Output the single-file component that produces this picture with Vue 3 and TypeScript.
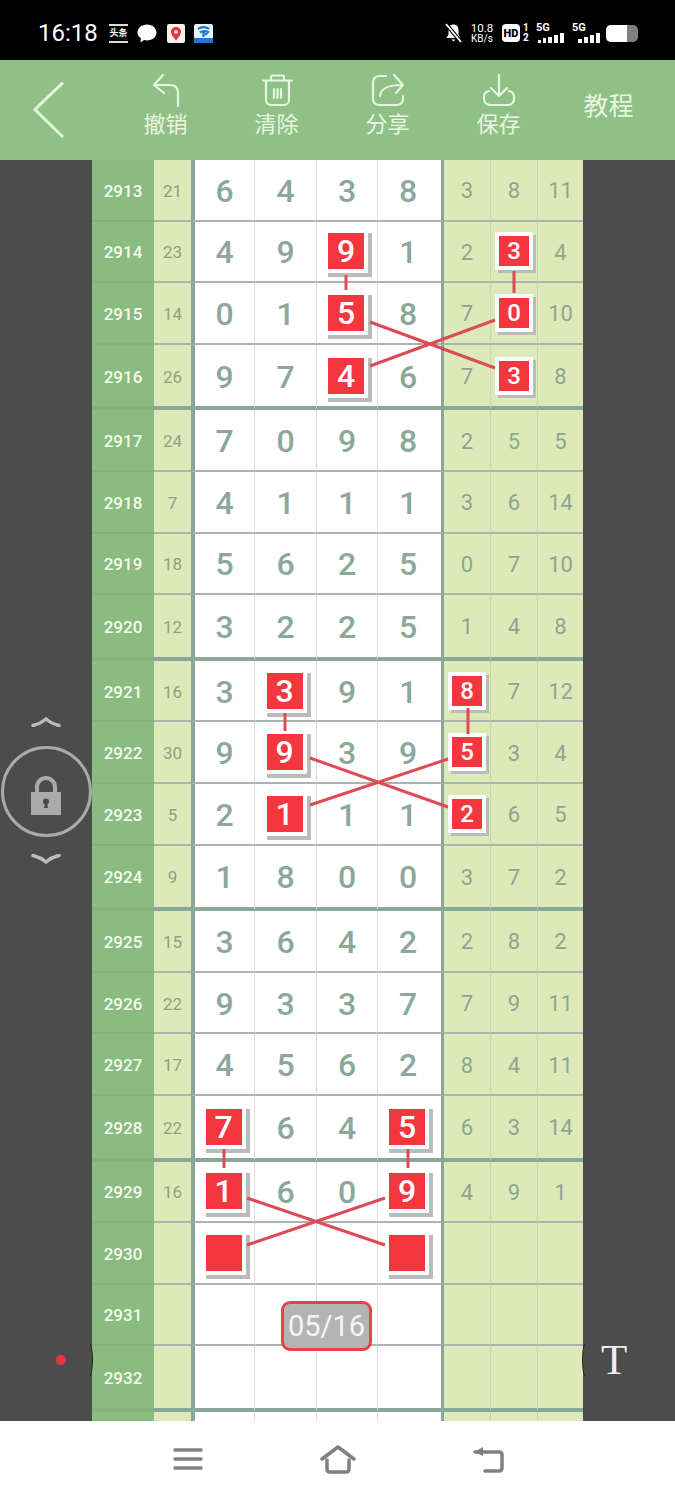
<template>
  <div class="page">
    <div class="status-bar">
      <div class="status-left">
        <span class="time">16:18</span>
        <div class="toutiao"><span>头条</span></div>
        <svg class="st-icon bubble" width="20" height="19" viewBox="0 0 20 19">
          <path d="M10 0.5c5.2 0 9.5 3.6 9.5 8s-4.300 8-9.500 8c-1 0-2-.1-2.900-.4L3.500 18.500l.4-4.200C1.700 12.900.5 10.800.5 8.500c0-4.400 4.300-8 9.500-8z" fill="#fff" />
        </svg>
        <svg class="st-icon map" width="18" height="19" viewBox="0 0 18 19">
          <rect width="18" height="19" rx="2" fill="#f4f1ea" />
          <path d="M9 3c-3 0-5 2.200-5 4.800C4 11 9 16.500 9 16.500s5-5.500 5-8.700C14 5.200 12 3 9 3z" fill="#d9363e" />
          <circle cx="9" cy="8" r="2" fill="#f8c9c9" />
        </svg>
        <svg class="st-icon telecom" width="19" height="19" viewBox="0 0 19 19">
          <rect width="19" height="19" rx="2" fill="#e8f2fb" />
          <rect y="14" width="19" height="5" fill="#1c78d2" />
          <path d="M4 5c3-2.500 8-2.500 11 0M6 8.500c2-1.500 5-2 8-.5l-3 3M9.500 7v6" fill="none" stroke="#1c78d2" stroke-width="2.200" />
        </svg>
      </div>
      <div class="status-right">
        <svg width="19" height="20" viewBox="0 0 19 20">
          <path d="M9.500 1.500c-3 0-5 2.200-5 5.500v4.500L2.500 15h14l-2-3.500V7c0-3.300-2-5.500-5-5.500z" fill="#fff" />
          <path d="M7.500 16.500h4l-2 2z" fill="#fff" />
          <path d="M2 1l15 18" stroke="#000" stroke-width="4" />
          <path d="M2 1l15 18" stroke="#fff" stroke-width="1.800" />
        </svg>
        <div class="speed">
          <span>10.8</span>
          <span class="speed-unit">KB/s</span>
        </div>
        <div class="hd"><span>HD</span></div>
        <div class="sim"><span>1</span><span>2</span></div>
        <div class="signal first">
          <span class="five-g">5G</span>
          <div class="bars">
            <i v-for="h in [3, 5, 6, 8, 10]" :key="h" :style="{ height: h + 'px' }"></i>
          </div>
        </div>
        <div class="signal second">
          <span class="five-g">5G</span>
          <div class="bars">
            <i v-for="h in [4, 6, 8, 10]" :key="h" :style="{ height: h + 'px' }"></i>
          </div>
        </div>
        <div class="battery"><div class="battery-level"></div></div>
      </div>
    </div>

    <div class="toolbar">
      <div class="back">
        <svg width="36" height="60" viewBox="0 0 36 60">
          <path d="M31 2.500 3 29.500 31 57" fill="none" stroke="#e4f5dc" stroke-width="3" />
        </svg>
      </div>
      <div class="tool">
        <svg class="tool-icon" viewBox="0 0 36 36">
          <path d="M15 3 6 13l10 8M6 13h16q8 0 8 8v13" />
        </svg>
        <span>撤销</span>
      </div>
      <div class="tool">
        <svg class="tool-icon" viewBox="0 0 36 36">
          <path d="M4 8.500h29M12 8V5q0-1.500 1.500-1.500h10Q25 3.500 25 5v3M7 9v19a5 5 0 0 0 5 5h13a5 5 0 0 0 5-5V9M15 17v9M18.500 17v9M22 17v9" />
        </svg>
        <span>清除</span>
      </div>
      <div class="tool">
        <svg class="tool-icon" viewBox="0 0 36 36">
          <path d="M16 4H9a6 6 0 0 0-6 6v17a6 6 0 0 0 6 6h18a6 6 0 0 0 6-6v-3M10 24c1-8 8-11 22-11M24 3l9 10-7 8" />
        </svg>
        <span>分享</span>
      </div>
      <div class="tool">
        <svg class="tool-icon" viewBox="0 0 36 36">
          <path d="M18 3v21M10 16l8 8 8-8M8 19q-5 1-5 6v2a6 6 0 0 0 6 6h18a6 6 0 0 0 6-6v-2q0-5-5-6" />
        </svg>
        <span>保存</span>
      </div>
      <div class="tutorial">教程</div>
    </div>

    <div class="main">
      <div class="rail left-rail">
        <svg class="chevron" width="30" height="10" viewBox="0 0 30 10">
          <path d="M2 8.500Q9 7 15 2q6 5 13 6.500" />
        </svg>
        <div class="lock">
          <svg width="32" height="40" viewBox="0 0 32 40">
            <path d="M7 18V11a9 9 0 0 1 18 0v7" fill="none" stroke="#aaa" stroke-width="4" />
            <rect x="1" y="16" width="30" height="23" fill="#aaa" />
            <circle cx="16" cy="25.500" r="3" fill="#4c4c4c" />
            <path d="M15 26h2l1 6h-4z" fill="#4c4c4c" />
          </svg>
        </div>
        <svg class="chevron" width="30" height="10" viewBox="0 0 30 10">
          <path d="M2 1.500Q9 3 15 8q6-5 13-6.500" />
        </svg>
        <div class="rec-dot"></div>
        <div class="notch notch-left"></div>
      </div>

      <div class="board">
        <div
          v-for="(row, i) in rows"
          :key="i"
          :class="['row', { end: (i + 1) % 4 === 0 }]"
        >
          <div class="cell issue">{{ row.no }}</div>
          <div class="cell sum">{{ row.sum }}</div>
          <div
            v-for="(n, j) in row.main"
            :key="'m' + j"
            :class="['cell', 'digit', 'd' + j]"
          >
            <span v-if="row.hit.includes(j)" class="mark">{{ n }}</span>
            <template v-else>{{ n }}</template>
          </div>
          <div
            v-for="(n, j) in row.side"
            :key="'s' + j"
            :class="['cell', 'side', 's' + j]"
          >
            <span v-if="row.sideHit.includes(j)" class="mark small">{{ n }}</span>
            <template v-else>{{ n }}</template>
          </div>
        </div>

        <svg class="links" width="491" height="1261" viewBox="92 160 491 1261">
          <line
            v-for="(l, i) in links"
            :key="i"
            :x1="l[0]"
            :y1="l[1]"
            :x2="l[2]"
            :y2="l[3]"
          />
        </svg>
        <div class="date-pill">05/16</div>
      </div>

      <div class="rail right-rail">
        <div class="text-btn">T</div>
        <div class="notch notch-right"></div>
      </div>
    </div>

    <div class="nav-bar">
      <svg width="30" height="24" viewBox="0 0 30 24">
        <path d="M2 3h26M2 12h26M2 21h26" fill="none" stroke="#808080" stroke-width="3.500" stroke-linecap="round" />
      </svg>
      <svg width="36" height="29" viewBox="0 0 36 29">
        <path d="M2 14 18 2l16 12M7 15v9q0 3 3 3h16q3 0 3-3v-9" fill="none" stroke="#808080" stroke-width="3.500" stroke-linecap="round" stroke-linejoin="round" />
      </svg>
      <svg width="32" height="27" viewBox="0 0 32 27">
        <path d="M3 6h24q3 0 3 3v13q0 3-3 3H13" fill="none" stroke="#808080" stroke-width="3.500" stroke-linecap="round" />
        <path d="M11 1 2 6l9 4z" fill="#808080" />
      </svg>
    </div>
  </div>
</template>

<script setup lang="ts">
interface Row {
  no: number | string
  sum: number | string
  main: (number | string)[]
  side: (number | string)[]
  hit: number[]
  sideHit: number[]
}

const mk = (
  no: number | string,
  sum: number | string,
  main: string,
  side: (number | string)[],
  hit: number[] = [],
  sideHit: number[] = []
): Row => ({ no, sum, main: main.split(''), side, hit, sideHit })

const rows: Row[] = [
  mk(2913, 21, '6438', [3, 8, 11]),
  mk(2914, 23, '4991', [2, 3, 4], [2], [1]),
  mk(2915, 14, '0158', [7, 0, 10], [2], [1]),
  mk(2916, 26, '9746', [7, 3, 8], [2], [1]),
  mk(2917, 24, '7098', [2, 5, 5]),
  mk(2918, 7, '4111', [3, 6, 14]),
  mk(2919, 18, '5625', [0, 7, 10]),
  mk(2920, 12, '3225', [1, 4, 8]),
  mk(2921, 16, '3391', [8, 7, 12], [1], [0]),
  mk(2922, 30, '9939', [5, 3, 4], [1], [0]),
  mk(2923, 5, '2111', [2, 6, 5], [1], [0]),
  mk(2924, 9, '1800', [3, 7, 2]),
  mk(2925, 15, '3642', [2, 8, 2]),
  mk(2926, 22, '9337', [7, 9, 11]),
  mk(2927, 17, '4562', [8, 4, 11]),
  mk(2928, 22, '7645', [6, 3, 14], [0, 3]),
  mk(2929, 16, '1609', [4, 9, 1], [0, 3]),
  { no: 2930, sum: '', main: ['', '', '', ''], side: ['', '', ''], hit: [0, 3], sideHit: [] },
  { no: 2931, sum: '', main: ['', '', '', ''], side: ['', '', ''], hit: [], sideHit: [] },
  { no: 2932, sum: '', main: ['', '', '', ''], side: ['', '', ''], hit: [], sideHit: [] },
  { no: '', sum: '', main: ['', '', '', ''], side: ['', '', ''], hit: [], sideHit: [] }
]

// page coordinates, the svg viewBox maps them onto the board
const links: number[][] = [
  [346, 275, 346, 290],
  [514, 271, 514, 293],
  [370, 322, 495, 368],
  [370, 366, 495, 320],
  [285, 713, 285, 731],
  [468, 708, 468, 734],
  [310, 758, 448, 807],
  [310, 805, 448, 759],
  [224, 1149, 224, 1168],
  [408, 1149, 408, 1168],
  [247, 1198, 385, 1245],
  [247, 1245, 385, 1198]
]
</script>

<style scoped>
.page {
  width: 675px;
  height: 1500px;
  display: flex;
  flex-direction: column;
  overflow: hidden;
  font-family: Roboto, 'Noto Sans CJK SC', sans-serif;
}

.status-bar {
  height: 60px;
  flex-shrink: 0;
  background: #000;
  color: #fff;
  display: flex;
  justify-content: space-between;
  align-items: center;
  padding: 14px 37px 8px 38px;
  box-sizing: border-box;
}

.status-left,
.status-right {
  display: flex;
  align-items: center;
}

.time {
  font-size: 24px;
  width: 71px;
}

.toutiao {
  width: 19px;
  height: 19px;
  border-top: 2px solid #ddd;
  border-bottom: 2px solid #ddd;
  box-sizing: border-box;
  display: flex;
  align-items: center;
  justify-content: center;
}

.toutiao span {
  font-size: 9px;
  font-weight: 700;
  line-height: 11px;
  white-space: nowrap;
}

.bubble {
  margin-left: 9px;
}

.map {
  margin-left: 10px;
}

.telecom {
  margin-left: 9px;
}

.speed {
  display: flex;
  flex-direction: column;
  align-items: center;
  width: 26px;
  margin-left: 6px;
  font-size: 11.500px;
  line-height: 12px;
}

.speed-unit {
  font-size: 10px;
  line-height: 10px;
}

.hd {
  width: 18px;
  height: 18px;
  margin-left: 7px;
  border-radius: 4px;
  background: #fff;
  color: #000;
  display: flex;
  align-items: center;
  justify-content: center;
  font-size: 11px;
  font-weight: 900;
}

.sim {
  display: flex;
  flex-direction: column;
  margin-left: 3px;
  font-size: 10px;
  font-weight: 700;
  line-height: 10px;
  width: 6px;
}

.signal {
  width: 28px;
  height: 20px;
  position: relative;
}

.signal.first {
  margin-left: 7px;
}

.signal.second {
  margin-left: 8px;
  width: 28px;
}

.five-g {
  position: absolute;
  left: 0;
  top: 0;
  font-size: 11px;
  font-weight: 700;
  line-height: 10px;
}

.bars {
  position: absolute;
  right: 0;
  bottom: 0;
  display: flex;
  align-items: flex-end;
  gap: 2px;
}

.bars i {
  display: block;
  width: 4px;
  background: #fff;
}

.signal.first .bars i:nth-child(-n+2) {
  width: 3px;
}

.battery {
  width: 32px;
  height: 17px;
  margin-left: 6px;
  border-radius: 5px;
  background: #808080;
  overflow: hidden;
}

.battery-level {
  width: 21px;
  height: 100%;
  background: #fff;
}

.toolbar {
  height: 100px;
  flex-shrink: 0;
  background: #8fc187;
  color: #e8f5e1;
  display: flex;
  align-items: flex-start;
}

.back {
  width: 110px;
  padding: 20px 0 0 32px;
  box-sizing: border-box;
}

.back svg {
  display: block;
}

.tool {
  width: 111px;
  padding-top: 12px;
  display: flex;
  flex-direction: column;
  align-items: center;
  font-size: 22px;
  line-height: 26px;
}

.tool-icon {
  width: 36px;
  height: 36px;
  fill: none;
  stroke: #e8f5e1;
  stroke-width: 2.200;
  stroke-linecap: round;
  stroke-linejoin: round;
}

.tool span {
  margin-top: 4px;
}

.tutorial {
  flex: 1;
  padding-right: 12px;
  text-align: center;
  font-size: 25px;
  line-height: 94px;
}

.main {
  flex: 1;
  display: flex;
  min-height: 0;
  background: #4c4c4c;
}

.rail {
  width: 92px;
  flex-shrink: 0;
  display: flex;
  flex-direction: column;
  align-items: center;
  position: relative;
}

.left-rail {
  padding: 557px 0 56px;
  box-sizing: border-box;
  z-index: 2;
}

.chevron {
  display: block;
  fill: none;
  stroke: #bdbdbd;
  stroke-width: 3.500;
  stroke-linecap: round;
}

.lock {
  width: 91px;
  height: 91px;
  margin: 19px 0 17px;
  box-sizing: border-box;
  flex-shrink: 0;
  border: 3px solid #aaa;
  border-radius: 50%;
  display: flex;
  align-items: center;
  justify-content: center;
  padding-top: 8px;
}

.rec-dot {
  width: 10px;
  height: 10px;
  border-radius: 50%;
  background: #e8353c;
  margin-top: auto;
  align-self: flex-start;
  margin-left: 56px;
}

.notch {
  position: absolute;
  top: 1184px;
  width: 3px;
  height: 32px;
  border: 1px solid #222;
  box-sizing: border-box;
}

.notch-left {
  left: 90px;
  border-left: 0;
  border-radius: 0 3px 3px 0 / 0 16px 16px 0;
}

.notch-right {
  left: -1px;
  border-right: 0;
  border-radius: 3px 0 0 3px / 16px 0 0 16px;
}

.right-rail {
  padding-bottom: 37px;
  box-sizing: border-box;
  justify-content: flex-end;
  align-items: flex-start;
}

.text-btn {
  margin-left: 18px;
  font-family: 'Liberation Serif', serif;
  font-size: 43px;
  line-height: 48px;
  color: #eeeeee;
}

.board {
  width: 491px;
  flex-shrink: 0;
  position: relative;
  overflow: hidden;
  background: #fff;
}

.row {
  display: grid;
  grid-template-columns: 62px 37px 64px 62px 61px 66px 47px 47px 45px;
  height: 61.600px;
}

.row.end {
  height: 65.600px;
}

.cell {
  display: flex;
  align-items: center;
  justify-content: center;
  box-sizing: border-box;
  padding-top: 2px;
  border-bottom: 2px solid #a9b5ae;
}

.row.end .cell {
  border-bottom: 4px solid #8aa898;
}

.issue {
  background: #8abb80;
  color: #f4fbef;
  font-size: 17px;
  font-weight: 500;
}

.row .issue,
.row.end .issue {
  border-bottom-color: #84b47b;
}

.sum {
  background: #dde9b9;
  color: #8f9f87;
  font-size: 17px;
}

.digit {
  background: #fff;
  color: #8ba89b;
  font-size: 32px;
  font-weight: 500;
  border-right: 1px solid #dce0dd;
}

.d0 {
  border-left: 4px solid #87a896;
}

.d3 {
  border-right: 3px solid #87a896;
  padding-right: 3px;
}

.side {
  background: #dde9b9;
  color: #8fa593;
  font-size: 22px;
  border-right: 1px solid #c9d8ac;
}

.s2 {
  border-right: 0;
}

.mark {
  width: 44px;
  height: 44px;
  box-sizing: border-box;
  border: 4px solid #fff;
  background: #f4363f;
  background-clip: padding-box;
  box-shadow: 4px 4px 0 #bbb;
  color: #fff;
  font-size: 32px;
  font-weight: 500;
  display: flex;
  align-items: center;
  justify-content: center;
  flex-shrink: 0;
  margin: 0 2px 2px 0;
}

.mark.small {
  width: 38px;
  height: 38px;
  box-shadow: 3px 3px 0 #bbb;
  font-size: 24px;
  margin: 0 0 2px 0;
}

.links {
  position: absolute;
  left: 0;
  top: 0;
  pointer-events: none;
}

.links line {
  stroke: #de4a55;
  stroke-width: 3;
}

.date-pill {
  position: absolute;
  left: 189px;
  top: 1141px;
  width: 91px;
  height: 50px;
  box-sizing: border-box;
  border: 3px solid #e8404f;
  border-radius: 9px;
  background: #b4b4b4;
  color: #f5f5f5;
  font-size: 29px;
  display: flex;
  align-items: center;
  justify-content: center;
}

.nav-bar {
  height: 79px;
  flex-shrink: 0;
  background: #fff;
  display: flex;
  align-items: center;
  gap: 116.500px;
  padding: 0 0 3px 173px;
  box-sizing: border-box;
}

.nav-bar svg {
  display: block;
  flex-shrink: 0;
}
</style>

<style>
body {
  background: #fff;
}
</style>
